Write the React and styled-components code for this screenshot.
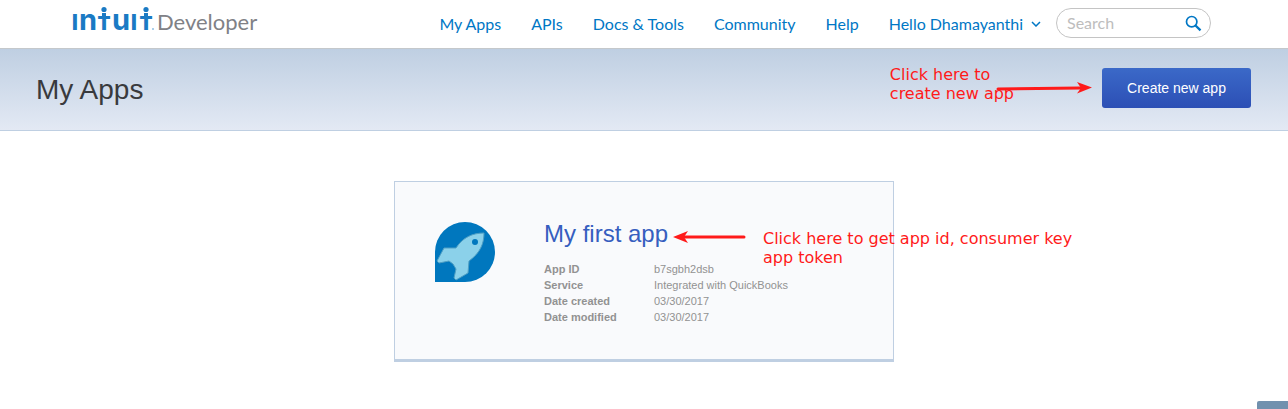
import React from "react";
import styled, { createGlobalStyle } from "styled-components";

const Global = createGlobalStyle`
  * { box-sizing: border-box; }
  body { margin: 0; background: #fff; font-family: "Liberation Sans", Arial, sans-serif; color: #393a3d; }
`;

const Header = styled.header`
  display: flex;
  align-items: flex-start;
  padding: 0 77px 0 68px;
  border-bottom: 1px solid #c4c8cb;
`;

const Logo = styled.a`
  display: block;
  flex: none;
  svg { display: block; }
`;

const Nav = styled.nav`
  display: flex;
  align-items: center;
  gap: 30px;
  height: 48px;
  margin-left: auto;
  font-family: Lato, sans-serif;
`;

const NavLink = styled.a`
  display: flex;
  align-items: center;
  gap: 8px;
  font-size: 16px;
  line-height: 20px;
  white-space: nowrap;
  color: #0077c5;
  text-decoration: none;
`;

const SearchBox = styled.form`
  display: flex;
  align-items: center;
  width: 155px;
  height: 30px;
  margin: 8px 0 0 15px;
  padding: 0 8px 0 10px;
  border: 1px solid #c4c4c4;
  border-radius: 15px;
`;

const SearchInput = styled.input`
  flex: 1;
  min-width: 0;
  padding: 0;
  border: 0;
  outline: 0;
  background: transparent;
  font: 16px/20px Lato, sans-serif;
  color: #393a3d;
  &::placeholder { color: #bdbdbd; opacity: 1; }
`;

const IconButton = styled.button`
  display: flex;
  padding: 0;
  border: 0;
  background: none;
`;

const TitleBar = styled.section`
  position: relative;
  display: flex;
  align-items: flex-start;
  justify-content: space-between;
  padding: 19px 37px 18px 36px;
  background: linear-gradient(#bfcfe2, #e3e9f4);
  border-bottom: 1px solid #bfcfe2;
`;

const Title = styled.h1`
  margin: 0;
  font-size: 28px;
  line-height: 44px;
  font-weight: 400;
`;

const CreateButton = styled.button`
  width: 149px;
  height: 40px;
  padding: 0;
  border: 0;
  border-radius: 3px;
  background: linear-gradient(#3b69c8, #2c4fb5);
  color: #fff;
  font: 14px/20px "Liberation Sans", Arial, sans-serif;
`;

const Note = styled.p`
  position: absolute;
  top: ${(p) => p.$top};
  left: ${(p) => p.$left};
  right: ${(p) => p.$right};
  margin: 0;
  font: 16px/19px "DejaVu Sans", sans-serif;
  white-space: nowrap;
  color: #ff1a1a;
`;

const Arrow = styled.svg`
  position: absolute;
  top: ${(p) => p.$top};
  left: ${(p) => p.$left};
  right: ${(p) => p.$right};
`;

const Main = styled.main`
  display: flex;
  justify-content: center;
  padding: 50px 20px 47px;
`;

const Card = styled.article`
  position: relative;
  display: flex;
  gap: 49px;
  width: 500px;
  padding: 36px 40px 34px;
  background: #f9fafc;
  border: 1px solid #bfcfe2;
  border-bottom-width: 3px;
`;

const AppIcon = styled.svg`
  flex: none;
  margin-top: 4px;
`;

const AppName = styled.h2`
  margin: 0 0 11px;
  font-size: 24px;
  line-height: 32px;
  font-weight: 400;
  a { color: #365ebf; text-decoration: none; }
`;

const Details = styled.dl`
  display: grid;
  grid-template-columns: 110px auto;
  margin: 0;
  font-size: 11px;
  line-height: 16px;
  color: #929292;
  dt { font-weight: 700; }
  dd { margin: 0; }
`;

const FeedbackTab = styled.aside`
  position: fixed;
  right: 0;
  bottom: 0;
  width: 31px;
  height: 8px;
  border-top-left-radius: 2px;
  background: #7191ae;
`;

const links = ["My Apps", "APIs", "Docs & Tools", "Community", "Help"];
const details = [
  ["App ID", "b7sgbh2dsb"],
  ["Service", "Integrated with QuickBooks"],
  ["Date created", "03/30/2017"],
  ["Date modified", "03/30/2017"],
];

function BrandMark() {
  return (
    <svg width="200" height="44" viewBox="68 0 200 44" aria-label="Intuit Developer">
      <g fill="#1a7ac4" fontFamily="Inter, sans-serif" textAnchor="middle">
        <g fontSize="22" fontWeight="800">
          <text x="75" y="30">I</text>
          <text x="134" y="30">I</text>
        </g>
        <g fontSize="19" fontWeight="900">
          <text x="104" y="30">T</text>
          <text x="146" y="30">T</text>
        </g>
        <g fontSize="29" fontWeight="700">
          <text x="88" y="30">n</text>
          <text x="121" y="30">u</text>
        </g>
        <rect x="102" y="13" width="4" height="4" />
        <rect x="144" y="13" width="4" height="4" />
        <circle cx="104" cy="9.5" r="2.6" />
        <circle cx="146" cy="9.5" r="2.6" />
        <circle cx="153" cy="29" r="1" fill="#8fbfe3" />
      </g>
      <text x="157" y="30" fill="#808186" fontFamily="Lato, sans-serif" fontWeight="400" fontSize="22">Developer</text>
    </svg>
  );
}

export default function App() {
  return (
    <>
      <Global />
      <Header>
        <Logo href="#"><BrandMark /></Logo>
        <Nav>
          {links.map((l) => <NavLink href="#" key={l}>{l}</NavLink>)}
          <NavLink href="#">
            Hello Dhamayanthi
            <svg width="10" height="6" viewBox="0 0 10 6" fill="none" stroke="#0077c5" strokeWidth="1.5"><path d="M1 1l4 4 4-4" /></svg>
          </NavLink>
        </Nav>
        <SearchBox>
          <SearchInput aria-label="Search" placeholder="Search" />
          <IconButton type="button" aria-label="Submit search">
            <svg width="17" height="17" viewBox="0 0 17 17" fill="none" stroke="#0077c5"><circle cx="6.7" cy="6.7" r="5.2" strokeWidth="1.7" /><path d="M10.5 10.5l5 4.8" strokeWidth="2.4" /></svg>
          </IconButton>
        </SearchBox>
      </Header>
      <TitleBar>
        <Title>My Apps</Title>
        <CreateButton type="button">Create new app</CreateButton>
        <Note $top="16px" $right="274px">Click here to<br />create new app</Note>
        <Arrow $top="31px" $right="196px" width="96" height="16" viewBox="0 0 96 16">
          <path d="M2 9L84 8" stroke="#ff1a1a" strokeWidth="3" strokeLinecap="round" />
          <path d="M96 7.5L81 13.5L85 8L81 2z" fill="#ff1a1a" />
        </Arrow>
      </TitleBar>
      <Main>
        <Card>
          <AppIcon width="60" height="60" viewBox="0 0 60 60" aria-hidden="true">
            <path d="M0 60V30A30 30 0 1 1 30 60z" fill="#0077be" />
            <path d="M49 11C38 11 28 15 21 26L9 26L2 39L4 41L14 39L18 42L21 47L19 56L21 58L33 51L34 39C45 31 49 22 49 11z" fill="#8bd1ea" stroke="#4f9fc4" strokeWidth="1" strokeLinejoin="round" />
            <circle cx="40" cy="20" r="3" fill="#0077be" />
          </AppIcon>
          <div>
            <AppName><a href="#">My first app</a></AppName>
            <Details>
              {details.map(([k, v]) => (
                <React.Fragment key={k}><dt>{k}</dt><dd>{v}</dd></React.Fragment>
              ))}
            </Details>
          </div>
          <Arrow $top="47px" $left="278px" width="74" height="16" viewBox="0 0 74 16">
            <path d="M12 8H71" stroke="#ff1a1a" strokeWidth="3" strokeLinecap="round" />
            <path d="M0 8L15 2L11 8L15 14z" fill="#ff1a1a" />
          </Arrow>
          <Note $top="47px" $left="368px">Click here to get app id, consumer key<br />app token</Note>
        </Card>
      </Main>
      <FeedbackTab />
    </>
  );
}
